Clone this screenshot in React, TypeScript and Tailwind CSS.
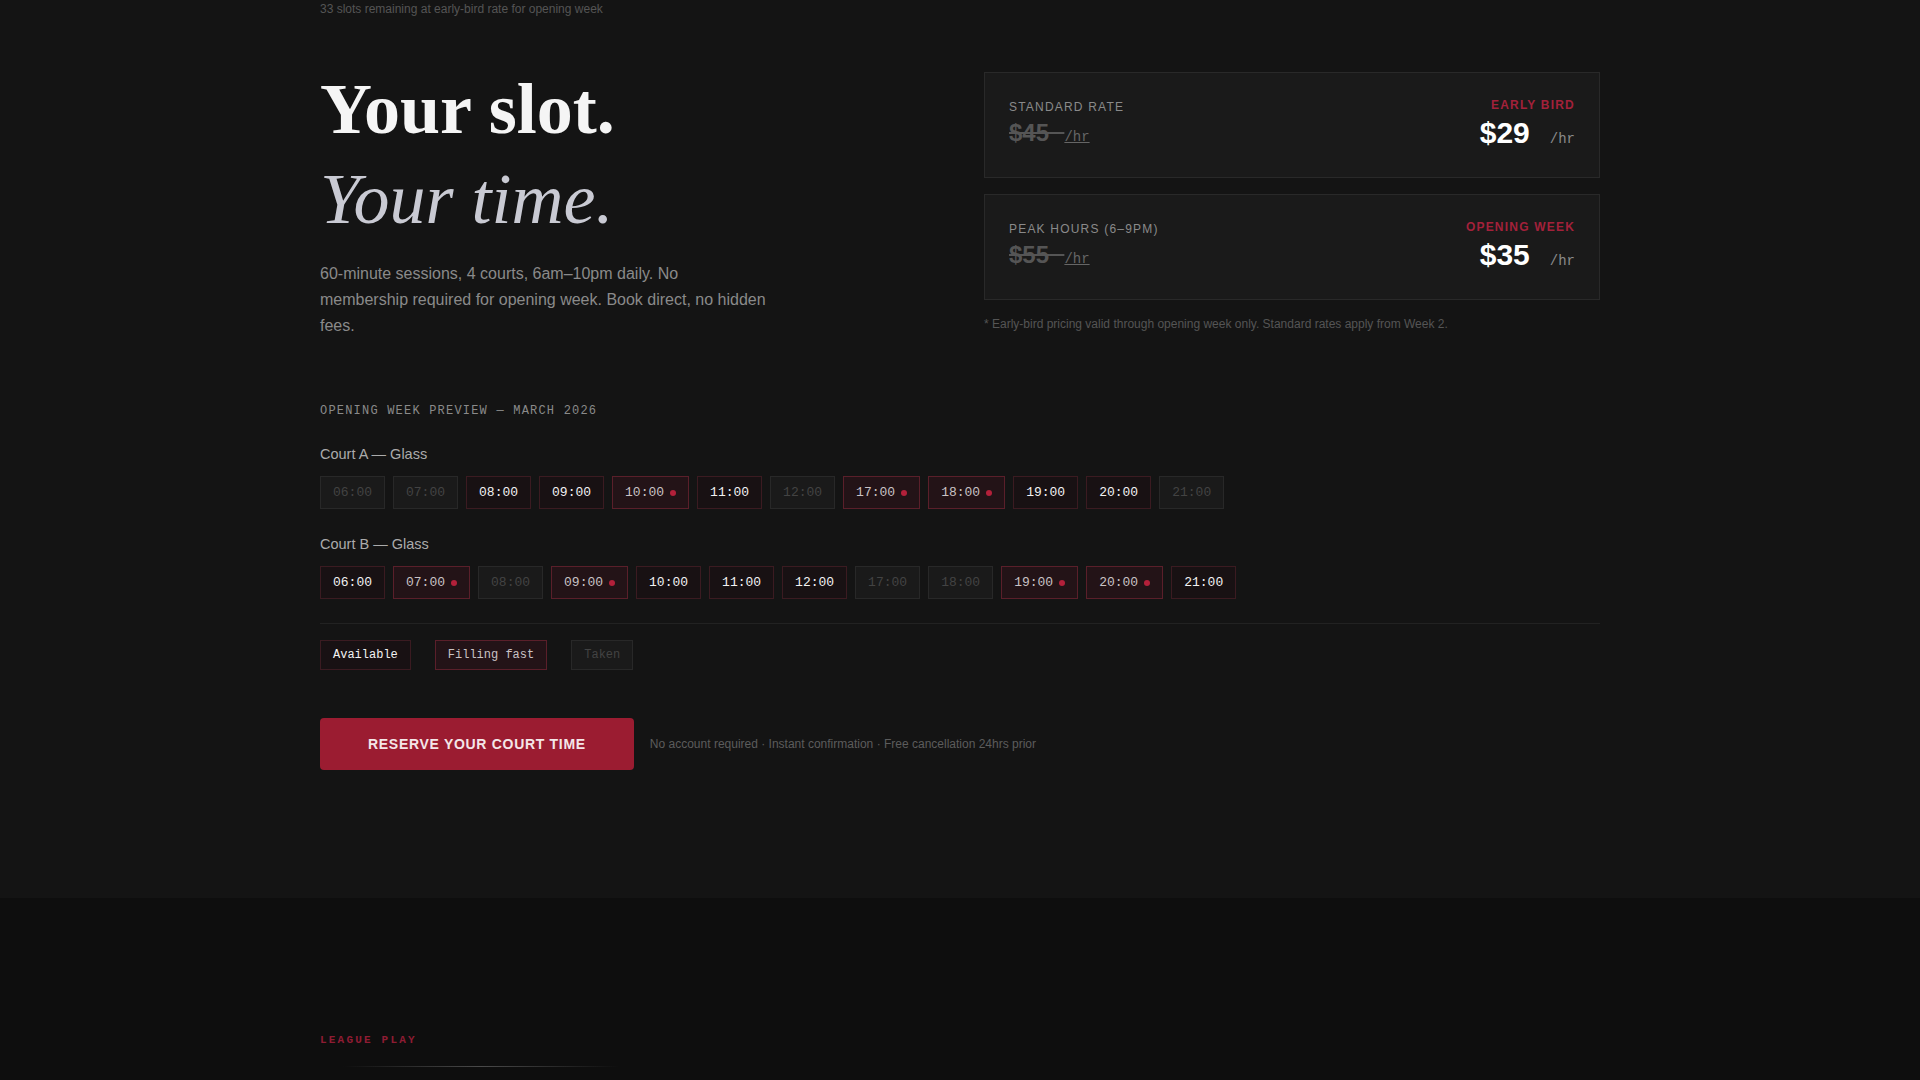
type SlotState = "taken" | "open" | "fast";

const courts: { name: string; slots: [string, SlotState][] }[] = [
  {
    name: "Court A — Glass",
    slots: [
      ["06:00", "taken"],
      ["07:00", "taken"],
      ["08:00", "open"],
      ["09:00", "open"],
      ["10:00", "fast"],
      ["11:00", "open"],
      ["12:00", "taken"],
      ["17:00", "fast"],
      ["18:00", "fast"],
      ["19:00", "open"],
      ["20:00", "open"],
      ["21:00", "taken"],
    ],
  },
  {
    name: "Court B — Glass",
    slots: [
      ["06:00", "open"],
      ["07:00", "fast"],
      ["08:00", "taken"],
      ["09:00", "fast"],
      ["10:00", "open"],
      ["11:00", "open"],
      ["12:00", "open"],
      ["17:00", "taken"],
      ["18:00", "taken"],
      ["19:00", "fast"],
      ["20:00", "fast"],
      ["21:00", "open"],
    ],
  },
];

const prices = [
  { label: "Standard rate", was: "$45", tag: "Early bird", now: "$29" },
  { label: "Peak hours (6–9pm)", was: "$55", tag: "Opening week", now: "$35" },
];

const slotStyle: Record<SlotState, string> = {
  taken: "bg-[#1a1a1a] border-[#282828] text-[#434343]",
  open: "bg-[#181113] border-[#3b1b21] text-[#f2f2f2]",
  fast: "bg-[#231317] border-[#5a1f2a] text-[#c9c2c4]",
};

const mono = { fontFamily: '"Liberation Mono", "DejaVu Sans Mono", monospace' };

function Slot({ time, state }: { time: string; state: SlotState }) {
  return (
    <div
      className={`flex items-center border px-3 py-[7px] text-[13px] leading-[17px] ${slotStyle[state]}`}
      style={mono}
    >
      {time}
      {state === "fast" && <span className="ml-1.5 h-1.5 w-1.5 rounded-full bg-[#b3203a]" />}
    </div>
  );
}

export default function App() {
  return (
    <div
      className="min-h-screen bg-[#0e0e0e] text-white"
      style={{ fontFamily: '"Liberation Sans", Arial, sans-serif' }}
    >
      <section className="bg-[#141414] pb-32">
        <div className="mx-auto w-[1280px]">
          <p className="text-xs leading-[18px] text-[#555]">33 slots remaining at early-bird rate for opening week</p>

          {/* hero */}
          <div className="mt-[46px] grid grid-cols-2 items-center gap-12">
            <div>
              <h1
                className="text-[72px] leading-[90px]"
                style={{ fontFamily: '"Liberation Serif", "Times New Roman", serif' }}
              >
                <span className="block font-bold text-[#f5f5f5]">Your slot.</span>
                <span className="block italic font-normal text-[#c9cad3]">Your time.</span>
              </h1>
              <p className="mt-[17px] max-w-md text-base leading-[26px] text-[#8a8a8a]">
                60-minute sessions, 4 courts, 6am–10pm daily. No membership required for opening week. Book direct, no hidden fees.
              </p>
            </div>

            <div>
              <div className="flex flex-col gap-4">
                {prices.map((p) => (
                  <div
                    key={p.label}
                    className="flex items-center justify-between border border-[#292929] bg-[#1a1a1a] px-6 pt-6 pb-[26px]"
                  >
                    <div>
                      <div className="text-xs uppercase leading-4 tracking-[0.1em] text-[#8a8a8a]">{p.label}</div>
                      <div className="mt-[2px] flex h-8 items-baseline">
                        <span className="text-2xl font-bold leading-8 text-[#555] line-through">{p.was}{"\u00a0\u00a0\u200a"}</span>
                        <span className="text-sm leading-none text-[#666] underline" style={mono}>/hr</span>
                      </div>
                    </div>
                    <div className="flex flex-col items-end">
                      <div className="text-xs font-bold uppercase leading-4 tracking-[0.1em] text-[#a3213a]">{p.tag}</div>
                      <div className="mt-[2px] flex h-9 items-baseline">
                        <span className="text-3xl font-bold leading-9 text-white">{p.now}</span>
                        <span className="ml-5 text-sm leading-none text-[#8a8a8a]" style={mono}>/hr</span>
                      </div>
                    </div>
                  </div>
                ))}
              </div>
              <p className="mt-4 text-xs leading-4 text-[#555]">
                * Early-bird pricing valid through opening week only. Standard rates apply from Week 2.
              </p>
            </div>
          </div>

          {/* schedule preview */}
          <div className="mt-16">
            <div className="text-xs uppercase leading-4 tracking-widest text-[#8a8a8a]" style={mono}>
              Opening week preview — March 2026
            </div>

            <div className="mt-6 flex flex-col gap-6">
              {courts.map((c) => (
                <div key={c.name}>
                  <div className="mb-[11px] text-[14.5px] leading-[22px] text-[#ababab]">{c.name}</div>
                  <div className="flex gap-2">
                    {c.slots.map(([t, s]) => (
                      <Slot key={t} time={t} state={s} />
                    ))}
                  </div>
                </div>
              ))}
            </div>

            <div className="mt-6 flex gap-6 border-t border-[#222] pt-4">
              <div className={`border px-3 py-1.5 text-xs leading-4 ${slotStyle.open}`} style={mono}>Available</div>
              <div className={`border px-3 py-1.5 text-xs leading-4 ${slotStyle.fast}`} style={mono}>Filling fast</div>
              <div className={`border px-3 py-1.5 text-xs leading-4 ${slotStyle.taken}`} style={mono}>Taken</div>
            </div>

            <div className="mt-12 flex items-center gap-4">
              <button className="rounded-sm bg-[#9b1c31] px-12 py-4 text-sm font-bold uppercase leading-5 tracking-wider text-[#f4e6e8]">
                Reserve your court time
              </button>
              <span className="text-xs text-[#5c5c5c]">
                No account required · Instant confirmation · Free cancellation 24hrs prior
              </span>
            </div>
          </div>
        </div>
      </section>

      <section className="pt-[134px] pb-32">
        <div className="mx-auto w-[1280px]">
          <div className="text-[11px] font-bold uppercase leading-4 tracking-[0.2em] text-[#8e1c33]" style={mono}>
            League play
          </div>
          <div className="ml-[23px] mt-[18px] h-px w-[276px] bg-gradient-to-r from-transparent via-[#4a4a4a] to-transparent" />
        </div>
      </section>
    </div>
  );
}
